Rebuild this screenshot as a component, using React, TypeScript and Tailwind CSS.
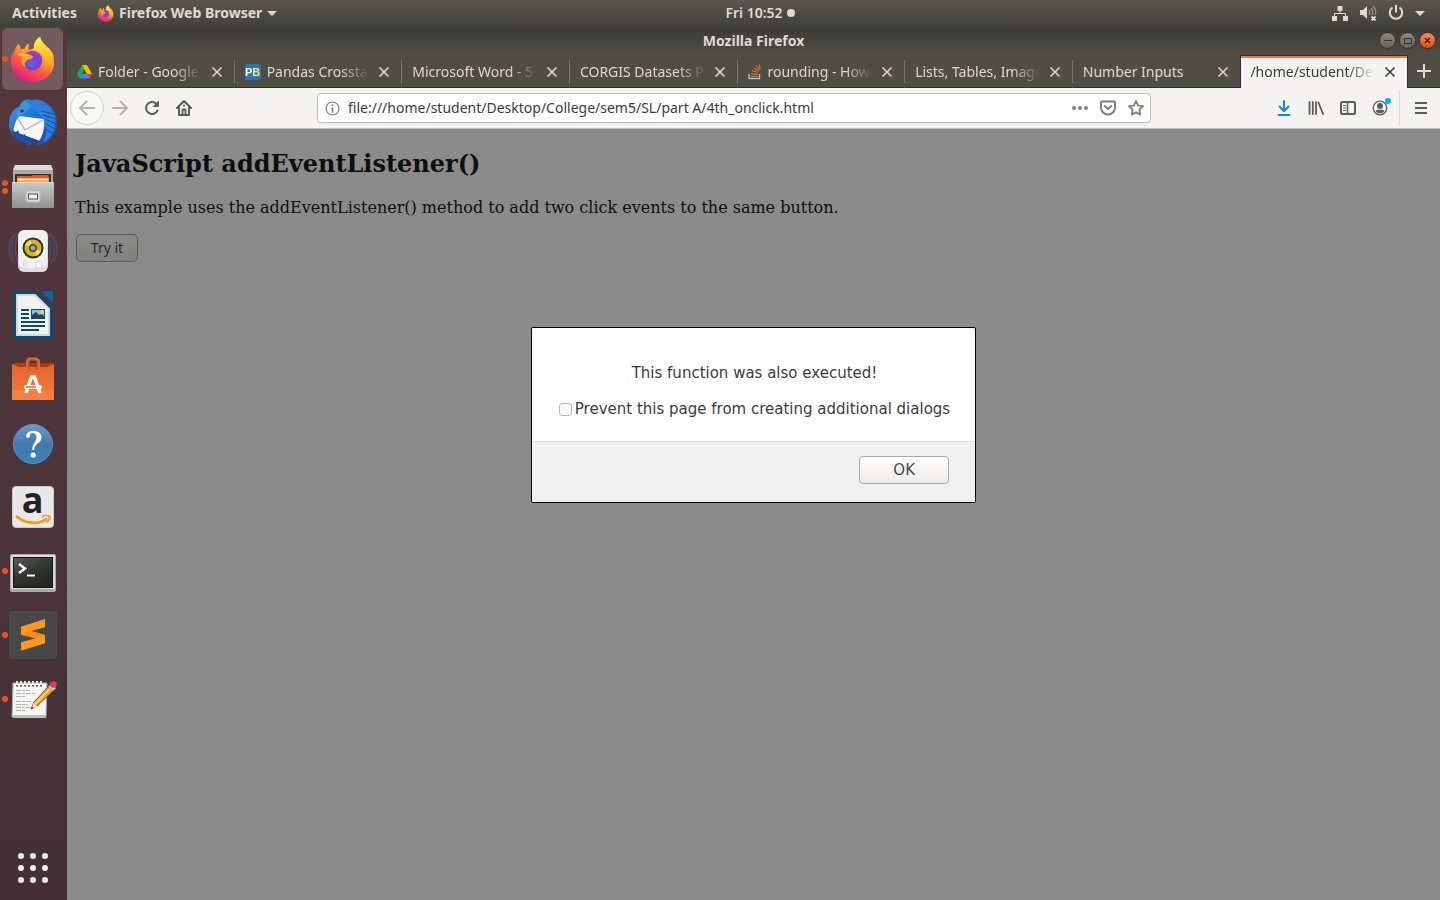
import type { ReactNode } from "react";

const UI_FONT = "font-['Noto_Sans','Open_Sans',sans-serif]";

function FirefoxLogo({ size, id }: { size: number; id: string }) {
  return (
    <svg width={size} height={size} viewBox="0 0 48 48" aria-hidden="true">
      <defs>
        <linearGradient id={`${id}-body`} x1="0.8" y1="0.05" x2="0.3" y2="1">
          <stop offset="0" stopColor="#ffec3f" />
          <stop offset="0.35" stopColor="#ffad28" />
          <stop offset="0.62" stopColor="#ff5c3a" />
          <stop offset="1" stopColor="#e4168c" />
        </linearGradient>
        <linearGradient id={`${id}-flame`} x1="0.5" y1="0" x2="0.6" y2="1">
          <stop offset="0" stopColor="#fff44f" />
          <stop offset="0.6" stopColor="#ffb52b" />
          <stop offset="1" stopColor="#ff7a33" stopOpacity="0.4" />
        </linearGradient>
        <radialGradient id={`${id}-globe`} cx="0.4" cy="0.65" r="0.7">
          <stop offset="0" stopColor="#5a62e8" />
          <stop offset="0.6" stopColor="#7a3fd6" />
          <stop offset="1" stopColor="#b434d6" />
        </radialGradient>
      </defs>
      <path
        d="M10 8c1 2 2 4 2 6 1-1 3-1 4-1 1-3 2-4 4-5v6c3 0 5-1 7-3-1-3 2-8 5-10 1 7 13 12 14 25C47 38 36 47 24 47S1 38 2 25c0-4 2-8 4-10 0-3 2-5 4-7z"
        fill={`url(#${id}-body)`}
      />
      <path
        d="M31 1c-4 3-7 8-5 13 5 1 11 5 11 13 0 6-4 10-9 12 9-1 15-7 15-15 1 3 1 6 0 8 3-4 3-9 2-13-1-4-4-6-6-8l0 3c-3-4-8-7-8-13z"
        fill={`url(#${id}-flame)`}
      />
      <circle cx="24" cy="25" r="10" fill={`url(#${id}-globe)`} />
      <path
        d="M8 19c3-3 10-1 13 0 2 1 3 2 4 2-1 3-5 3-7 4-1 1-3 3-1 7-5-2-5-9-3-11-2 0-4-1-6-2z"
        fill="#ff9f2c"
      />
      <path d="M9 19c3-2 9-1 12 1-3 0-7 1-12-1z" fill="#ffc14a" />
    </svg>
  );
}

function ThunderbirdLogo() {
  return (
    <svg width="50" height="50" viewBox="0 0 50 50" aria-hidden="true">
      <defs>
        <linearGradient id="tb" x1="0" y1="0" x2="1" y2="1">
          <stop offset="0" stopColor="#3fa0e6" />
          <stop offset="0.45" stopColor="#1f6fd0" />
          <stop offset="1" stopColor="#2a3f9a" />
        </linearGradient>
      </defs>
      <path
        d="M14 4c2-2 5-3 9-2 12-3 26 7 26 22 0 14-10 23-23 24 3-1 5-3 6-5-5 3-9 4-14 4l3-2C9 43 0 35 1 25c0-8 4-14 11-17 0-2 1-3 2-4z"
        fill="url(#tb)"
      />
      <path d="M11 18l25 3c1 8-1 16-5 22L5 34c1-7 3-12 6-16z" fill="#f7f7fa" />
      <path d="M9 19l8 13 18-10" fill="none" stroke="#a8adb5" strokeWidth="1.3" />
      <path d="M5 33l27 10-3 3C18 46 8 42 5 33z" fill="#22458f" />
      <path d="M4 30l3 5 3-3 2 6 5-2 2 6 6-2-2 5C12 46 4 40 4 30z" fill="#1d4ea6" />
      <path d="M14 5c6-4 14-2 17 2-7 0-12 4-15 9-3 2-6 3-7 5-1-6 1-12 5-16z" fill="#3a93dd" />
      <path d="M18 3c7-3 20 0 26 9 5 8 4 18 0 24-2 4-5 7-9 8 3-5 4-12 2-19-2-8-10-12-19-22z" fill="#2c7ed6" />
      <path d="M33 13l13 3M35 17l13 4M37 21l11 5M38 26l9 5M38 31l6 4" stroke="#174ea8" strokeWidth="1" />
      <circle cx="14" cy="13" r="1.6" fill="#26344c" />
    </svg>
  );
}

function FilesLogo() {
  return (
    <svg width="44" height="46" viewBox="0 0 44 46" aria-hidden="true">
      <defs>
        <linearGradient id="cab" x1="0" y1="0" x2="0" y2="1">
          <stop offset="0" stopColor="#c9c9c7" />
          <stop offset="1" stopColor="#929290" />
        </linearGradient>
      </defs>
      <path d="M4 1h36l2 6v36H2V7z" fill="#a9a9a7" />
      <path d="M4 1h36l2 5H2z" fill="#dcdcda" />
      <rect x="4" y="10" width="36" height="10" fill="#33302e" />
      <path d="M6 12h14l2-1h15l1 2v7H6z" fill="#e0581a" />
      <path d="M6 14h32v6H6z" fill="#f3a24c" />
      <path d="M7 15.5h30" stroke="#fff3dc" strokeWidth="1.5" />
      <rect x="1" y="18" width="42" height="26" rx="1" fill="url(#cab)" />
      <path d="M1.500 18.500h41" stroke="#deded9" />
      <rect x="15" y="27" width="14" height="11" rx="2" fill="#d9d9d7" stroke="#bdbdbb" />
      <rect x="17.500" y="30" width="9" height="5" fill="#ededed" stroke="#4c4c4c" />
    </svg>
  );
}

function RhythmboxLogo() {
  return (
    <svg width="50" height="46" viewBox="0 0 50 46" aria-hidden="true">
      <g fill="none" stroke="#4a628d" strokeWidth="1.2" opacity="0.55">
        <path d="M8 5C3 11 2 26 7 36M5 8C0 15 0 26 4 33M11 4C6 12 6 28 11 38" />
        <path d="M42 5c5 6 6 21 1 31M45 8c5 7 5 18 1 25M39 4c5 8 5 24 0 34" />
      </g>
      <rect x="10" y="2" width="30" height="42" rx="6" fill="#dededc" />
      <rect x="11" y="2" width="28" height="38" rx="6" fill="#f1f1ef" />
      <circle cx="25" cy="20" r="10.500" fill="#303030" />
      <circle cx="25" cy="20" r="8.500" fill="#d7b51e" />
      <path d="M25 20l-8-3a8.500 8.500 0 0 1 5-5zM25 20l8 3a8.500 8.500 0 0 1-5 5z" fill="#f2dc62" />
      <circle cx="25" cy="20" r="4.300" fill="#55554e" />
      <circle cx="25" cy="20" r="2.300" fill="#a8a6b3" />
      <circle cx="17" cy="36" r="2" fill="none" stroke="#d4d4d2" />
      <path d="M28 36c0-4 6-4 6 0v4h-6z" fill="#fff" stroke="#cfcfcd" />
    </svg>
  );
}

function WriterLogo() {
  return (
    <svg width="40" height="48" viewBox="0 0 40 48" aria-hidden="true">
      <path d="M2 0h21l17 17v29a2 2 0 0 1-2 2H2a2 2 0 0 1-2-2V2a2 2 0 0 1 2-2z" fill="#0c4a72" />
      <path d="M28 0h10a2 2 0 0 1 2 2v10z" fill="#0368a8" />
      <path d="M3 3h19l15 15v27H3z" fill="#f2f2f2" />
      <path d="M4 4h18l14 14v26H4z" fill="none" stroke="#d5d8da" strokeWidth="2" />
      <path d="M8 19h8M8 23h8M8 27h8M8 31h24M8 35h24M8 39h18" stroke="#0c4a72" strokeWidth="2" />
      <rect x="18" y="18" width="14" height="10" fill="#0c4a72" />
      <rect x="19" y="19" width="12" height="8" fill="#7dc3ec" />
      <circle cx="29" cy="21" r="2" fill="#e6cf52" />
      <path d="M19 27v-3l4-3 3 3 2-1 3 2v2z" fill="#274455" />
    </svg>
  );
}

function SoftwareLogo() {
  return (
    <svg width="42" height="44" viewBox="0 0 42 44" aria-hidden="true">
      <defs>
        <linearGradient id="bag" x1="0" y1="0" x2="0" y2="1">
          <stop offset="0" stopColor="#e8632a" />
          <stop offset="1" stopColor="#f27c40" />
        </linearGradient>
      </defs>
      <path d="M2 6h38l2 4H0z" fill="#a63d16" />
      <path d="M0 7l7 3h28l7-3v36H0z" fill="url(#bag)" />
      <path d="M0 33h42v10H0z" fill="#f5854a" opacity="0.6" />
      <path d="M15.500 13V6c0-2 1-4 3-4h5c2 0 3 2 3 4v7" fill="none" stroke="#e06a35" strokeWidth="3" />
      <path d="M17 13V6c0-2 1-3 2-3h4c1 0 2 1 2 3v7" fill="none" stroke="#b2441a" strokeWidth="1" />
      <path d="M14 36l5.500-16h3L28 36" fill="none" stroke="#fff" strokeWidth="3.500" />
      <path d="M14 30h14" stroke="#fff" strokeWidth="4" strokeLinecap="round" />
      <path d="M14 30h10" stroke="#e8652c" strokeWidth="1.500" />
    </svg>
  );
}

function HelpLogo() {
  return (
    <svg width="42" height="44" viewBox="0 -2 42 44" aria-hidden="true">
      <defs>
        <linearGradient id="help" x1="0" y1="0" x2="0" y2="1">
          <stop offset="0" stopColor="#6a9ccc" />
          <stop offset="0.5" stopColor="#4279ad" />
          <stop offset="1" stopColor="#3b80bb" />
        </linearGradient>
      </defs>
      <circle cx="21" cy="21" r="19.500" fill="url(#help)" stroke="#5f90c0" strokeWidth="1" />
      <path
        d="M14 13c1-4 4-5 7.500-5 5 0 8 2.500 8 6.500 0 5.500-7.500 6.500-7.500 12.500h-1.600c-.6-6.500 4.100-8 4.100-12.500 0-3-1.500-4.500-4-4.500-2 0-3 .8-2.600 2.500.5 2.500-3.900 3-3.900.5z"
        fill="#fff"
      />
      <circle cx="21.200" cy="32" r="2.600" fill="#fff" />
    </svg>
  );
}

function AmazonLogo() {
  return (
    <span className="flex h-[42px] w-[42px] flex-col items-center rounded-sm border border-[#c9c9c9] bg-[#e8e8e8]">
      <span className="h-7 font-['Open_Sans',sans-serif] text-[36px] leading-[26px] font-bold text-[#222]">a</span>
      <svg width="38" height="12" viewBox="0 0 38 12" aria-hidden="true">
        <path d="M2 1c9 8 22 9 31 3" fill="none" stroke="#f79a1e" strokeWidth="2.800" />
        <path d="M28 1.500c3-1.500 6-1.500 7-.5s0 4-2 6.500" fill="none" stroke="#f79a1e" strokeWidth="2" />
      </svg>
    </span>
  );
}

function TerminalLogo() {
  return (
    <svg width="46" height="42" viewBox="0 -4 46 42" aria-hidden="true">
      <defs>
        <linearGradient id="term" x1="0" y1="0" x2="0.6" y2="1">
          <stop offset="0" stopColor="#5b5d5b" />
          <stop offset="0.5" stopColor="#353735" />
          <stop offset="1" stopColor="#242624" />
        </linearGradient>
      </defs>
      <rect width="46" height="38" rx="2" fill="#a9aaa8" />
      <rect x="1" y="1" width="44" height="34" rx="1" fill="#dcdddb" />
      <rect x="3.500" y="3.500" width="39" height="30" fill="url(#term)" stroke="#111" />
      <path d="M9 10l6 4.500L9 19" fill="none" stroke="#fff" strokeWidth="2.400" />
      <path d="M17 21.500h8" stroke="#fff" strokeWidth="2" />
    </svg>
  );
}

function SublimeLogo() {
  return (
    <svg width="48" height="48" viewBox="0 0 48 48" aria-hidden="true">
      <rect width="48" height="48" rx="3" fill="#484848" />
      <path d="M12 15.700L36 8v8.300L22 20l14 4v8.300l-24 7.400v-8.400l14.500-4L12 23.700z" fill="#ff9a1f" />
      <path d="M12 23.700L22 20l14 4-9.500 3.300z" fill="#f28a14" />
    </svg>
  );
}

function TextEditorLogo() {
  return (
    <svg width="48" height="40" viewBox="0 0 48 40" aria-hidden="true">
      <path d="M4 4h34l-1 34H3z" fill="#f4f4f2" stroke="#a9a9a6" />
      <path d="M4 36h33v3H4z" fill="#bcbcb9" />
      <path d="M8 2v3M12 2v3M16 2v3M20 2v3M24 2v3M28 2v3M32 2v3" stroke="#e4e4e2" strokeWidth="2" />
      <path d="M8 6v1.500M12 6v1.500M16 6v1.500M20 6v1.500M24 6v1.500M28 6v1.500M32 6v1.500" stroke="#555" strokeWidth="2" />
      <path
        d="M7 11.500h14M7 14.500h19M7 17.500h9M7 22.500h16M7 25.500h12M7 28.500h14M7 31.500h10"
        stroke="#b0b0b0"
        strokeDasharray="5 1 3 1"
      />
      <path d="M22 30l3-7L39 8l5 4-16 15z" fill="#f19a2c" stroke="#8d5213" />
      <path d="M26 25L41 10" stroke="#ffd08a" strokeWidth="2" />
      <path d="M22 30l2.500-6 4 3.500z" fill="#f3dcb6" />
      <path d="M22 30l1-2.500 1.500 1.500z" fill="#222" />
      <path d="M39 8l3-3 5 4-3 3z" fill="#c8c8c8" />
      <circle cx="44.500" cy="5.500" r="3.300" fill="#e2394c" />
    </svg>
  );
}

type DockEntry = { name: string; icon: ReactNode; dots: number; active?: boolean };

const DOCK: DockEntry[] = [
  { name: "Firefox Web Browser", icon: <FirefoxLogo size={47} id="fx-dock" />, dots: 1, active: true },
  { name: "Thunderbird Mail", icon: <ThunderbirdLogo />, dots: 0 },
  { name: "Files", icon: <FilesLogo />, dots: 2 },
  { name: "Rhythmbox", icon: <RhythmboxLogo />, dots: 0 },
  { name: "LibreOffice Writer", icon: <WriterLogo />, dots: 0 },
  { name: "Ubuntu Software", icon: <SoftwareLogo />, dots: 0 },
  { name: "Help", icon: <HelpLogo />, dots: 0 },
  { name: "Amazon", icon: <AmazonLogo />, dots: 0 },
  { name: "Terminal", icon: <TerminalLogo />, dots: 1 },
  { name: "Sublime Text", icon: <SublimeLogo />, dots: 1 },
  { name: "Text Editor", icon: <TextEditorLogo />, dots: 1 },
];

function DriveIcon() {
  return (
    <svg width="15" height="14" viewBox="0 0 15 14" className="shrink-0" aria-hidden="true">
      <path d="M5 0L0 9l2.500 4.500L7.500 4.500z" fill="#1ea362" />
      <path d="M5 0h5l5 9h-5z" fill="#ffba00" />
      <path d="M5 9h10l-2.500 4.500h-10z" fill="#4285f4" />
      <path d="M10.500 9H15l-2.500 4.500z" fill="#ea4335" />
    </svg>
  );
}

function PbIcon() {
  return (
    <span className="flex h-4 w-4 shrink-0 items-center justify-center rounded-[3px] bg-[#2f74b5] font-['Liberation_Sans',sans-serif] text-[11px] leading-4 font-bold text-white">
      P<span className="text-[#ffe873]">B</span>
    </span>
  );
}

function StackIcon() {
  return (
    <svg width="14" height="16" viewBox="0 0 14 16" className="shrink-0" aria-hidden="true">
      <path d="M1 10v4.500h10.500V10" fill="none" stroke="#bcbbbb" strokeWidth="1.300" />
      <path d="M3 12.300h6.500M3.200 9.600l6.400.8M4 6.700l6 1.800M5.600 3.700l5.200 3.300M8 1.500l3.600 4.800M11.200.5l1 5" stroke="#e87722" strokeWidth="1" />
    </svg>
  );
}

function Cross() {
  return (
    <svg width="12" height="12" viewBox="0 0 12 12" fill="none" stroke="currentColor" strokeWidth="1.600" aria-hidden="true">
      <path d="M1.500 1.500l9 9M10.500 1.500l-9 9" />
    </svg>
  );
}

const TABS: { title: string; icon?: ReactNode }[] = [
  { title: "Folder - Google D", icon: <DriveIcon /> },
  { title: "Pandas Crosstab", icon: <PbIcon /> },
  { title: "Microsoft Word - 5-c" },
  { title: "CORGIS Datasets Pr" },
  { title: "rounding - How t", icon: <StackIcon /> },
  { title: "Lists, Tables, Images" },
  { title: "Number Inputs" },
  { title: "/home/student/Des" },
];

function Tab({ title, icon, active, divided }: { title: string; icon?: ReactNode; active: boolean; divided: boolean }) {
  return (
    <div className={active ? "flex min-w-0 flex-1 text-[#3c3b37]" : "flex min-w-0 flex-1 text-[#dfdbd2]"}>
      <div
        className={
          active
            ? "flex min-w-0 flex-1 items-center border-x border-t border-[#2f2d29] bg-[#f4f3f2] pr-[11px] pl-[9px] shadow-[inset_0_2px_0_#f07746]"
            : "flex min-w-0 flex-1 items-center border-b border-[#33312c] pt-px pr-[11px] pl-[10px]"
        }
      >
        <button
          type="button"
          className={
            title === "Number Inputs"
              ? "flex min-w-0 flex-1 items-center overflow-hidden text-left text-sm whitespace-nowrap"
              : "flex min-w-0 flex-1 items-center gap-1.5 overflow-hidden text-left text-sm whitespace-nowrap [mask-image:linear-gradient(to_right,#000_76%,transparent_98%)]"
          }
        >
          {icon}
          {title}
        </button>
        <button type="button" aria-label={`Close ${title}`} className="ml-1.5 shrink-0">
          <Cross />
        </button>
      </div>
      {divided && <span className="my-[5px] w-px bg-[#77746c]" />}
    </div>
  );
}

function IconButton({ label, children, className = "" }: { label: string; children: ReactNode; className?: string }) {
  return (
    <button type="button" aria-label={label} className={`flex h-8 w-8 shrink-0 items-center justify-center ${className}`}>
      {children}
    </button>
  );
}

const stroke = { fill: "none", stroke: "currentColor", strokeWidth: 2, strokeLinecap: "round", strokeLinejoin: "round" } as const;

function TopBar() {
  return (
    <header className="grid h-7 shrink-0 grid-cols-3 items-center bg-linear-to-b from-[#5a564d] to-[#413f39] pb-0.5 text-sm text-[#dfdbd2]">
      <div className="flex items-center pl-3 font-bold">
        <button type="button">Activities</button>
        <button type="button" className="ml-5 flex items-center gap-[5px]">
          <FirefoxLogo size={17} id="fx-bar" />
          Firefox Web Browser
          <svg width="10" height="5" viewBox="0 0 10 5" aria-hidden="true">
            <path d="M0 0h10L5 5z" fill="#dfdbd2" />
          </svg>
        </button>
      </div>
      <button type="button" className="flex items-center gap-1 justify-self-center pl-20 font-semibold">
        Fri 10:52
        <span className="h-2 w-2 rounded-full bg-[#dfdbd2]" />
      </button>
      <button type="button" aria-label="System menu" className="mr-[15px] flex items-center gap-[11px] justify-self-end">
        <svg width="16" height="16" viewBox="0 0 16 16" aria-hidden="true">
          <path d="M5.500 1h5v5h-5zM0 11h5v5H0zM11 11h5v5h-5z" fill="#dfdbd2" />
          <path d="M8 6v2.500M2.500 11V8.500h11V11" fill="none" stroke="#dfdbd2" />
        </svg>
        <svg width="18" height="16" viewBox="0 0 18 16" aria-hidden="true">
          <path d="M1 5h3l4-4v13l-4-4H1z" fill="#dfdbd2" />
          <path d="M10 5c1 1 1 4 0 5M12 3c2 2 2 6 1 7M14 1c3 3 3 7 2 9" fill="none" stroke="#8f8c84" strokeWidth="1.500" />
          <path d="M12.500 11.500l4 4M16.500 11.500l-4 4" stroke="#dfdbd2" strokeWidth="1.800" />
        </svg>
        <svg width="16" height="16" viewBox="0 0 16 16" fill="none" stroke="#dfdbd2" strokeWidth="2" aria-hidden="true">
          <path d="M4.500 2.500a6.200 6.200 0 1 0 7 0M8 0v7.500" />
        </svg>
        <svg width="10" height="5" viewBox="0 0 10 5" aria-hidden="true">
          <path d="M0 0h10L5 5z" fill="#dfdbd2" />
        </svg>
      </button>
    </header>
  );
}

function Dock() {
  return (
    <nav aria-label="Dock" className="flex w-[67px] shrink-0 flex-col justify-between bg-linear-to-b from-[#54373b] via-[#4c343b] to-[#433036]">
      <ul>
        {DOCK.map((entry) => (
          <li key={entry.name} className="relative flex h-16 items-start justify-center pr-1 pl-0.5">
            <button
              type="button"
              aria-label={entry.name}
              className={
                entry.active
                  ? "flex h-[62px] w-[62px] items-center justify-center rounded-md bg-[#725a5d]"
                  : "flex h-[62px] w-[62px] items-center justify-center rounded-md"
              }
            >
              {entry.icon}
            </button>
            <span className="absolute top-0 left-0.5 flex h-[62px] flex-col items-center justify-center gap-0.5">
              {Array.from({ length: entry.dots }, (_, i) => (
                <span key={i} className="h-1.5 w-1.5 rounded-full bg-[#e95420]" />
              ))}
            </span>
          </li>
        ))}
      </ul>
      <button type="button" aria-label="Show applications" className="mr-px mb-[17px] grid grid-cols-3 gap-1.5 self-center">
        {Array.from({ length: 9 }, (_, i) => (
          <span key={i} className="h-1.5 w-1.5 rounded-full bg-[#f0eeee]" />
        ))}
      </button>
    </nav>
  );
}

function TitleBar() {
  return (
    <div className="grid h-[27px] shrink-0 grid-cols-[1fr_auto_1fr] items-center bg-linear-to-b from-[#3c3b37] to-[#504d45] pb-0.5">
      <span />
      <span className="text-sm font-bold text-[#dfdbd2]">Mozilla Firefox</span>
      <div className="mr-1 flex items-center gap-[3px] justify-self-end">
        <button type="button" aria-label="Minimize" className="flex h-[17px] w-[17px] items-center justify-center rounded-full border border-[#33312c] bg-linear-to-b from-[#8d8a82] to-[#67645c]">
          <span className="h-px w-2 bg-[#33312c]" />
        </button>
        <button type="button" aria-label="Maximize" className="flex h-[17px] w-[17px] items-center justify-center rounded-full border border-[#33312c] bg-linear-to-b from-[#8d8a82] to-[#67645c]">
          <span className="h-1.5 w-2 border border-[#33312c]" />
        </button>
        <button type="button" aria-label="Close window" className="flex h-[17px] w-[17px] items-center justify-center rounded-full border border-[#33312c] bg-linear-to-b from-[#f58a62] to-[#df4b16]">
          <svg width="7" height="7" viewBox="0 0 7 7" aria-hidden="true">
            <path d="M1 1l5 5M6 1L1 6" stroke="#42150a" strokeWidth="1.300" />
          </svg>
        </button>
      </div>
    </div>
  );
}

function TabStrip() {
  return (
    <div className="flex h-[33px] shrink-0 bg-[#504d45]">
      {TABS.map((tab, i) => (
        <Tab key={tab.title} title={tab.title} icon={tab.icon} active={i === TABS.length - 1} divided={i < TABS.length - 2} />
      ))}
      <button type="button" aria-label="New tab" className="flex w-8 items-center justify-center border-b border-[#33312c] text-[#dfdbd2]">
        <svg width="14" height="14" viewBox="0 0 14 14" stroke="currentColor" strokeWidth="2" aria-hidden="true">
          <path d="M7 0v14M0 7h14" />
        </svg>
      </button>
    </div>
  );
}

function Toolbar() {
  return (
    <div className="flex h-[41px] shrink-0 items-center border-b border-[#c4c1bd] bg-[#f4f3f2] text-[#5c5c5b]">
      <div className="flex w-[250px] shrink-0 items-center pl-[3px]">
        <button type="button" aria-label="Back" className="flex h-[34px] w-[34px] items-center justify-center rounded-full border border-[#cfcecc] bg-[#f8f8f7] text-[#b3b2b1]">
          <svg width="16" height="16" viewBox="0 0 16 16" {...stroke} aria-hidden="true">
            <path d="M15 8H1M7.500 1.500L1 8l6.500 6.500" />
          </svg>
        </button>
        <IconButton label="Forward" className="text-[#b3b2b1]">
          <svg width="16" height="16" viewBox="0 0 16 16" {...stroke} aria-hidden="true">
            <path d="M1 8h14M8.500 1.500L15 8l-6.500 6.500" />
          </svg>
        </IconButton>
        <IconButton label="Reload">
          <svg width="16" height="16" viewBox="0 0 16 16" {...stroke} aria-hidden="true">
            <path d="M13.500 10.500A6 6 0 1 1 12 3.500l1.500 1.500" />
            <path d="M14.500 1.500V6.500H9.500z" fill="currentColor" strokeWidth="1" />
          </svg>
        </IconButton>
        <IconButton label="Home">
          <svg width="16" height="16" viewBox="0 0 16 16" {...stroke} aria-hidden="true">
            <path d="M1 8l7-7 7 7M3 7.500V15h10V7.500" />
            <path d="M6.500 14.500V9.500h3v5" strokeWidth="1.800" />
            <path d="M8 5.500v.1" />
          </svg>
        </IconButton>
      </div>

      <div className="flex h-[30px] min-w-0 flex-1 items-center rounded-sm border border-[#c4c1bd] bg-white pl-[7px] shadow-xs">
        <svg width="15" height="15" viewBox="0 0 15 15" fill="none" stroke="#7b7b7a" strokeWidth="1.200" aria-hidden="true">
          <circle cx="7.500" cy="7.500" r="6.500" />
          <path d="M7.500 6.500v5M7.500 3.500v1.500" strokeWidth="1.600" />
        </svg>
        <input
          aria-label="Address"
          defaultValue="file:///home/student/Desktop/College/sem5/SL/part A/4th_onclick.html"
          className="ml-2 min-w-0 flex-1 bg-transparent text-sm text-[#3c3b37] outline-none"
        />
        <div className="flex items-center text-[#7f7f7e]">
          <button type="button" aria-label="Page actions" className="flex h-7 w-7 items-center justify-center">
            <svg width="16" height="4" viewBox="0 0 16 4" fill="currentColor" aria-hidden="true">
              <circle cx="2" cy="2" r="2" />
              <circle cx="8" cy="2" r="2" />
              <circle cx="14" cy="2" r="2" />
            </svg>
          </button>
          <button type="button" aria-label="Save to Pocket" className="flex h-7 w-7 items-center justify-center">
            <svg width="16" height="16" viewBox="0 0 16 16" {...stroke} aria-hidden="true">
              <path d="M2 1.500h12a1 1 0 0 1 1 1V7.500a7 7 0 0 1-14 0V2.500a1 1 0 0 1 1-1z" />
              <path d="M4.800 6L8 9l3.200-3" />
            </svg>
          </button>
          <button type="button" aria-label="Bookmark this page" className="flex h-7 w-7 items-center justify-center">
            <svg width="16" height="16" viewBox="0 0 16 16" {...stroke} strokeWidth="1.800" aria-hidden="true">
              <path d="M8 1l2.100 4.600 4.900.6-3.600 3.400.9 5L8 12.200l-4.300 2.400.9-5L1 6.200l4.900-.6z" />
            </svg>
          </button>
        </div>
      </div>

      <div className="flex w-[289px] shrink-0 items-center justify-end">
        <IconButton label="Downloads" className="text-[#0a84ff]">
          <svg width="14" height="16" viewBox="0 0 14 16" {...stroke} aria-hidden="true">
            <path d="M7 1v10M2.500 6.500L7 11l4.500-4.500M1.500 15h11" />
          </svg>
        </IconButton>
        <IconButton label="Library">
          <svg width="16" height="14" viewBox="0 0 16 14" {...stroke} aria-hidden="true">
            <path d="M1.500 1v12M4.800 1v12M8 1v12M10.500 1.500L15 13" strokeWidth="1.800" />
          </svg>
        </IconButton>
        <IconButton label="Sidebar">
          <svg width="16" height="14" viewBox="0 0 16 14" {...stroke} aria-hidden="true">
            <rect x="1" y="1" width="14" height="12" rx="1.500" />
            <path d="M7.500 1v12" strokeWidth="1.500" />
            <path d="M3.500 4.500h1.800M3.500 7h1.800M3.500 9.500h1.800" strokeWidth="1" />
          </svg>
        </IconButton>
        <IconButton label="Account" className="relative">
          <svg width="16" height="16" viewBox="0 0 16 16" aria-hidden="true">
            <circle cx="8" cy="8" r="6.800" fill="none" stroke="currentColor" strokeWidth="1.300" />
            <circle cx="8" cy="6" r="3" fill="currentColor" />
            <path d="M3.500 11c1-1.800 2.500-1.200 4.500-1.200s3.500-.6 4.500 1.200A5.200 5.200 0 0 1 8 13.300 5.200 5.200 0 0 1 3.500 11z" fill="currentColor" />
          </svg>
          <span className="absolute top-1.5 right-[5px] h-1.5 w-1.5 rounded-full bg-[#00b3f4]" />
        </IconButton>
        <span className="mr-[5px] ml-[3px] h-[34px] w-px bg-[#d8d7d5]" />
        <IconButton label="Menu" className="mr-[3px]">
          <svg width="12" height="12" viewBox="0 0 12 12" {...stroke} strokeLinecap="butt" aria-hidden="true">
            <path d="M0 1h12M0 6h12M0 11h12" />
          </svg>
        </IconButton>
      </div>
    </div>
  );
}

function AlertDialog() {
  return (
    <div className="absolute inset-0 flex items-start justify-center pt-[198px]">
      <div
        role="alertdialog"
        aria-label="Page message"
        className="rounded-xs border border-black bg-white font-['DejaVu_Sans',sans-serif] text-[15px] leading-5 text-[#3c3c3c]"
      >
        <div className="flex flex-col items-center gap-4 pt-[35px] pr-[25px] pb-[22px] pl-[27px]">
          <p>This function was also executed!</p>
          <label className="flex items-center gap-[3px] whitespace-nowrap">
            <input type="checkbox" className="h-[13px] w-[13px] appearance-none rounded-[3px] border border-[#bcbab8] bg-[#fafafa]" />
            Prevent this page from creating additional dialogs
          </label>
        </div>
        <div className="flex justify-end border-t border-[#e0e0e0] bg-[#f1f1f1] px-[26px] pt-3.5 pb-[18px]">
          <button type="button" className="h-7 w-[90px] rounded-[4px] border border-[#a9a7a4] bg-linear-to-b from-white to-[#eceae8] text-[#4a4a48]">
            OK
          </button>
        </div>
      </div>
    </div>
  );
}

export default function App() {
  return (
    <div className={`flex min-h-screen flex-col ${UI_FONT}`}>
      <TopBar />
      <div className="flex flex-1">
        <Dock />
        <div className="flex min-w-0 flex-1 flex-col">
          <TitleBar />
          <TabStrip />
          <Toolbar />
          <main className="relative flex-1 bg-[#8b8b8b] px-2 pt-[21px] font-['DejaVu_Serif',serif] text-[#0e0e0e]">
            <h2 className="text-2xl leading-7 font-bold">JavaScript addEventListener()</h2>
            <p className="mt-5 text-base leading-5">This example uses the addEventListener() method to add two click events to the same button.</p>
            <button
              type="button"
              className="mt-4 ml-px h-7 w-[62px] rounded-[5px] border border-[#5b5a59] bg-linear-to-b from-[#8b8b8b] to-[#828180] font-['Noto_Sans',sans-serif] text-sm text-[#2b2a28]"
            >
              Try it
            </button>
            <AlertDialog />
          </main>
        </div>
      </div>
    </div>
  );
}
